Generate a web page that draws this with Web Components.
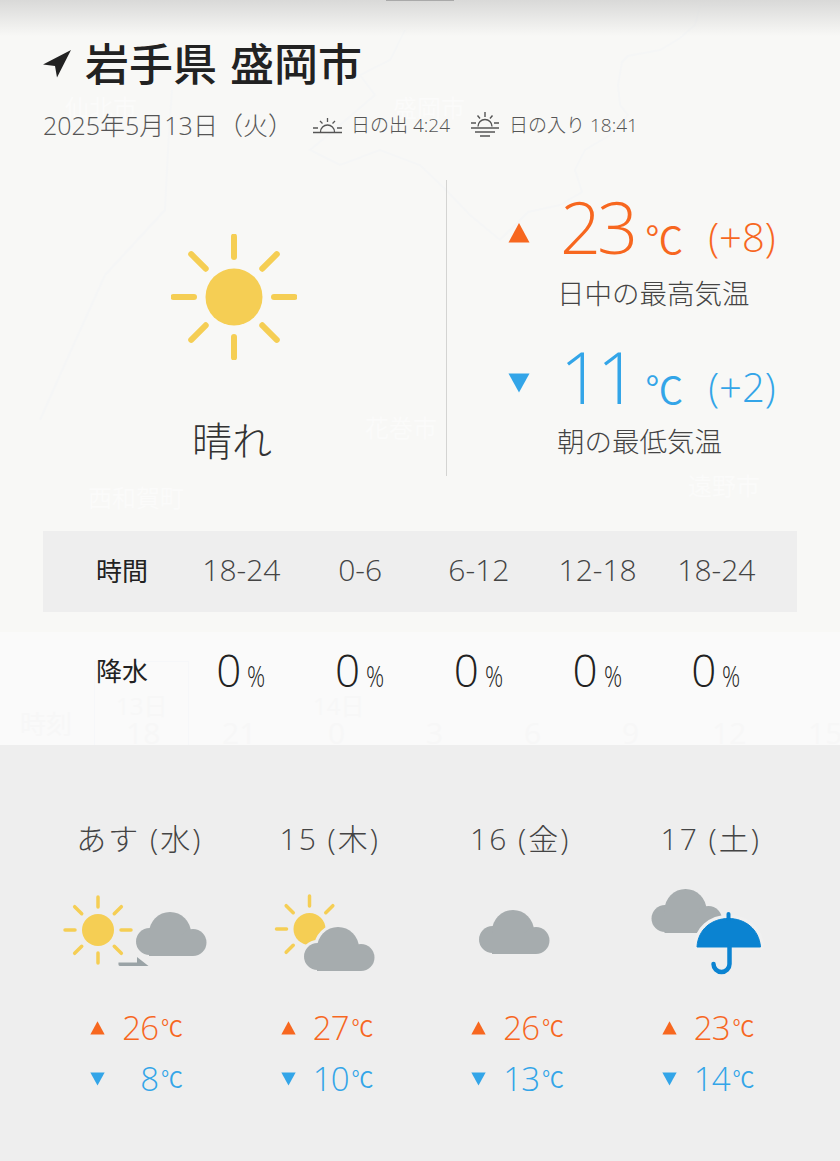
<!DOCTYPE html>
<html lang="ja">
<head>
<meta charset="utf-8">
<title>天気</title>
<style>
    html, body { margin: 0; background: #f8f8f6; }
    body { font-family: "Open Sans", "Noto Sans CJK JP", sans-serif; color: #444; }
</style>
</head>
<body>
<wx-app>
    <wx-map slot="map"></wx-map>
    <wx-header place="岩手県 盛岡市" date="2025年5月13日（火）" sunrise="日の出 4:24" sunset="日の入り 18:41"></wx-header>
    <wx-today></wx-today>
    <wx-rain></wx-rain>
    <wx-forecast>
        <wx-day label="あす (水)" icon="sun-cloud" high="26" low="8"></wx-day>
        <wx-day label="15 (木)" icon="sun-behind" high="27" low="10"></wx-day>
        <wx-day label="16 (金)" icon="cloud" high="26" low="13"></wx-day>
        <wx-day label="17 (土)" icon="rain" high="23" low="14"></wx-day>
    </wx-forecast>
</wx-app>

<script>
const ORANGE = "#f7671f"
const BLUE = "#33a5e8"
const SUN = "#f5ce54"
const GREY = "#a6acae"

const upTri = `<svg width="22" height="20" viewBox="0 0 22 20"><path d="M11 0 L21.500 19.500 L.5 19.500 Z" fill="${ORANGE}"/></svg>`
const downTri = `<svg width="22" height="20" viewBox="0 0 22 20"><path d="M.5 .5 L21.500 .5 L11 19.500 Z" fill="${BLUE}"/></svg>`

// sun with rays, angles are in degrees clockwise from the top
const sunSvg = (cx, cy, r, inner, outer, w, angles = [0, 45, 90, 135, 180, 225, 270, 315]) => {
    let rays = angles.map((a) => {
        let s = Math.sin(a * Math.PI / 180), c = -Math.cos(a * Math.PI / 180)
        return `<line x1="${cx + s * inner}" y1="${cy + c * inner}" x2="${cx + s * outer}" y2="${cy + c * outer}"/>`
    }).join("")
    return `<g stroke="${SUN}" stroke-width="${w}" stroke-linecap="round">${rays}</g><circle cx="${cx}" cy="${cy}" r="${r}" fill="${SUN}"/>`
}

// cloud is 70x44, x/y is its top left corner
const cloudSvg = (x, y, halo) => {
    let shape = `<circle cx="13.500" cy="29.500" r="13.500"/><circle cx="34" cy="21" r="21"/><circle cx="57" cy="30.500" r="13.500"/><rect x="13" y="24" width="44" height="20"/>`
    let edge = halo ? `<g transform="translate(${x} ${y})" fill="#eee" stroke="#eee" stroke-width="6">${shape}</g>` : ""
    return `${edge}<g transform="translate(${x} ${y})" fill="${GREY}">${shape}</g>`
}

const dayIcons = {
    "sun-cloud": sunSvg(53, 49, 16, 23, 33, 3.500) + cloudSvg(91, 31) +
        `<path d="M73.500 81.500 H92 V76 L103.500 85 H75 Q73 85 73.500 81.500 Z" fill="#9aa3a6"/>`,
    "sun-behind": sunSvg(73.500, 48, 16, 23, 33, 3.500, [0, 45, 270, 225, 315]) + cloudSvg(68, 46, true),
    "cloud": cloudSvg(53, 29),
    "rain": cloudSvg(34.500, 8) +
        `<path d="M79.500 66 C80 48 94 37 111 37 C129 37 143 48 144 66 Z" fill="#f0f0f0" stroke="#f0f0f0" stroke-width="6" stroke-linejoin="round"/>
         <path d="M80 66 C81 48 95 37.500 111.500 37.500 C128 37.500 142 48 143.500 66 Z" fill="#0b83d1" stroke="#0b83d1" stroke-width="1" stroke-linejoin="round"/>
         <path d="M111.500 38 V33" stroke="#0b83d1" stroke-width="4" stroke-linecap="round"/>
         <path d="M112.500 66 V83 A8 8 0 0 1 96.500 83" fill="none" stroke="#0b83d1" stroke-width="4.500" stroke-linecap="round"/>`
}

class WxApp extends HTMLElement {
    constructor() {
        super()
        this.attachShadow({ mode: "open" }).innerHTML = /*html*/`
        <style>
            :host { display: block; position: relative; width: 840px; height: 1161px; overflow: hidden; background: #f8f8f6; }
            #shade { position: absolute; left: 0; top: 0; right: 0; height: 36px; background: linear-gradient(#d9d9d8, rgba(248,248,246,0)); z-index: 2; }
            #grip { position: absolute; left: 386px; top: 0; width: 68px; height: 1px; background: #a9a9a9; z-index: 3; }
            #page { position: relative; z-index: 1; display: flex; flex-direction: column; height: 100%; }
        </style>
        <div id="shade"></div>
        <div id="grip"></div>
        <slot name="map"></slot>
        <div id="page"><slot></slot></div>`
    }
}

// the faint map behind the page
class WxMap extends HTMLElement {
    constructor() {
        super()
        const names = [["仙北市", 65, 92], ["盛岡市", 393, 92], ["花巻市", 365, 412], ["西和賀町", 88, 482], ["遠野市", 688, 470]]
        const cells = [["時刻", 20, 708, 26], ["13日", 116, 690, 24], ["14日", 313, 690, 24], ["18", 126, 717, 30], ["21", 222, 717, 30],
            ["0", 328, 717, 30], ["3", 426, 717, 30], ["6", 524, 717, 30], ["9", 622, 717, 30], ["12", 712, 717, 30], ["15", 808, 717, 30]]
        this.attachShadow({ mode: "open" }).innerHTML = /*html*/`
        <style>
            :host { position: absolute; inset: 0; display: block; }
            svg { position: absolute; left: 0; top: 0; }
            span { position: absolute; color: #fbfbfa; font-size: 24px; line-height: 32px; white-space: nowrap; }
            #lighter { position: absolute; left: 0; right: 0; top: 632px; height: 113px; background: #fafafa; }
            #lighter2 { position: absolute; left: 94px; top: 661px; width: 95px; height: 90px; border: 1px solid #f6f7f9; box-sizing: border-box; }
            .cell { color: #f7f7f7; }
        </style>
        <div id="lighter"></div>
        <div id="lighter2"></div>
        <svg width="840" height="745" fill="none" stroke="#f5f6f6" stroke-width="2">
            <path d="M840 4 L700 6 L695 25 L680 38 L660 50 L628 56 L622 62 L618 85 L620 105 L628 115 L610 135 L585 150 L575 170 L582 192 L560 205"/>
            <path d="M560 205 L528 212 L500 240 L470 215 L446 190 L420 165 L380 150 L340 165 L310 150 L340 125 L375 95 L360 75 L390 60 L405 30"/>
            <path d="M172 90 L168 150 L165 210 L105 275 L60 375 L40 420"/>
        </svg>
        ${names.map((n) => `<span style="left:${n[1]}px;top:${n[2]}px">${n[0]}</span>`).join("")}
        ${cells.map((c) => `<span class="cell" style="left:${c[1]}px;top:${c[2]}px;font-size:${c[3]}px">${c[0]}</span>`).join("")}`
    }
}

class WxHeader extends HTMLElement {
    constructor() {
        super()
        this.attachShadow({ mode: "open" }).innerHTML = /*html*/`
        <style>
            :host { display: block; padding: 35px 0 38px 43px; }
            h1 { margin: 0; height: 54px; display: flex; align-items: center; font: 500 44px/54px "Noto Sans CJK JP", sans-serif; color: #222; white-space: pre; word-spacing: 3px; }
            h1 svg { margin-right: 14px; margin-top: 3px; }
            #sub { display: flex; align-items: center; height: 36px; margin-top: 17px; color: #555; }
            #date { font-size: 25px; font-weight: 300; width: 270px; white-space: nowrap; }
            .sun { display: flex; align-items: center; font-size: 19px; font-weight: 300; white-space: nowrap; }
            .sun svg { margin-right: 9px; }
            #rise { width: 157px; }
        </style>
        <h1>
            <svg width="28" height="28" viewBox="0 0 28 28"><path d="M0 14.500 L28 0 L14 27.500 L12 16 Z" fill="#222"/></svg>
            <span id="place"></span>
        </h1>
        <div id="sub">
            <span id="date"></span>
            <span class="sun" id="rise">
                <svg width="29" height="20" viewBox="0 0 29 20" fill="none" stroke="#555" stroke-width="1.300">
                    <path d="M0 18.500 H29 M7.500 18 A7 7 0 0 1 21.500 18 M0 14 H5 M24 14 H29 M14.500 4 V8 M7 7 L9.500 9.500 M22 7 L19.500 9.500"/>
                </svg>
                <span id="riseText"></span>
            </span>
            <span class="sun" id="set">
                <svg width="30" height="26" viewBox="0 0 30 26" fill="none" stroke="#555" stroke-width="1.400">
                    <path d="M1 17 H29 M5 21 H25 M10 25 H20 M8 15.500 A7 7 0 0 1 22 15.500 M1 12 H6 M24 12 H29 M15 1 V6 M7.500 4.500 L10 7.500 M22.500 4.500 L20 7.500"/>
                </svg>
                <span id="setText"></span>
            </span>
        </div>`
    }
    connectedCallback() {
        this.shadowRoot.querySelector("#place").textContent = this.getAttribute("place")
        this.shadowRoot.querySelector("#date").textContent = this.getAttribute("date")
        this.shadowRoot.querySelector("#riseText").textContent = this.getAttribute("sunrise")
        this.shadowRoot.querySelector("#setText").textContent = this.getAttribute("sunset")
    }
}

class WxToday extends HTMLElement {
    constructor() {
        super()
        this.attachShadow({ mode: "open" }).innerHTML = /*html*/`
        <style>
            :host { display: grid; grid-template-columns: 446px 1fr; height: 296px; flex: none; }
            #now { display: flex; flex-direction: column; align-items: center; padding: 54px 0 0 22px; box-sizing: border-box; }
            #now svg { display: block; }
            #now div { font-size: 40px; font-weight: 300; line-height: 50px; margin: 56px 0 0 -4px; color: #333; }
            #temps { border-left: 1px solid #d4d4d2; padding-left: 61px; }
            .line { display: grid; grid-template-columns: 52px auto; }
            .line svg { margin-top: 43px; }
            .big { display: flex; align-items: baseline; height: 92px; white-space: nowrap; }
            .num { font-size: 72px; font-weight: 350; letter-spacing: -4px; line-height: 92px; }
            .unit { font-size: 38px; font-weight: 350; margin-left: 11px; width: 63px; }
            .diff { font-size: 40px; font-weight: 350; position: relative; top: -2px; }
            .cap { grid-column: 2; font-size: 27.500px; font-weight: 300; line-height: 36px; color: #444; margin: 4px 0 0 -3px; white-space: nowrap; }
            .line + .line { margin-top: 18px; }
            .line + .line .cap { margin-top: 2px; }
            .hi { color: ${ORANGE}; } .lo { color: ${BLUE}; }
        </style>
        <div id="now">
            <svg width="126" height="126" viewBox="0 0 126 126">${sunSvg(63, 63, 28.500, 40, 60.500, 6)}</svg>
            <div>晴れ</div>
        </div>
        <div id="temps">
            <div class="line hi">${upTri}
                <div class="big"><span class="num">23</span><span class="unit">℃</span><span class="diff">(+8)</span></div>
                <div class="cap">日中の最高気温</div>
            </div>
            <div class="line lo">${downTri}
                <div class="big"><span class="num">11</span><span class="unit">℃</span><span class="diff">(+2)</span></div>
                <div class="cap">朝の最低気温</div>
            </div>
        </div>`
    }
}

class WxRain extends HTMLElement {
    constructor() {
        super()
        const hours = ["18-24", "0-6", "6-12", "12-18", "18-24"]
        const rows = `repeat(5, 118.750px)`
        this.attachShadow({ mode: "open" }).innerHTML = /*html*/`
        <style>
            :host { display: block; padding-top: 55px; height: 269px; box-sizing: border-box; flex: none; }
            .row { display: grid; grid-template-columns: 139px ${rows}; align-items: center; justify-items: center; margin-left: 43px; width: 754px; }
            #time { height: 81px; background: #eee; }
            #rain { height: 120px; }
            b { font: 400 26px/1 "Noto Sans CJK JP", sans-serif; color: #222; padding: 0 0 4px 19px; }
            .h { font-size: 30px; font-weight: 300; color: #444; padding-bottom: 4px; }
            .p { font-size: 44px; font-weight: 300; color: #222; white-space: nowrap; padding-bottom: 4px; }
            .p small { display: inline-block; width: 19px; margin-left: 6px; font-size: 30px; transform: scaleX(.75); transform-origin: left; }
        </style>
        <div class="row" id="time"><b>時間</b>${hours.map((h) => `<span class="h">${h}</span>`).join("")}</div>
        <div class="row" id="rain"><b>降水</b>${hours.map(() => `<span class="p">0<small>%</small></span>`).join("")}</div>`
    }
}

class WxForecast extends HTMLElement {
    constructor() {
        super()
        this.attachShadow({ mode: "open" }).innerHTML = /*html*/`
        <style>
            :host { display: grid; grid-template-columns: repeat(4, 190.500px); padding: 73px 0 0 45px; background: #eee; flex: 1; }
        </style>
        <slot></slot>`
    }
}

class WxDay extends HTMLElement {
    constructor() {
        super()
        this.attachShadow({ mode: "open" }).innerHTML = /*html*/`
        <style>
            :host { display: block; }
            #label { text-align: center; font-size: 30px; font-weight: 300; letter-spacing: 2px; line-height: 42px; color: #444; height: 42px; padding-right: 2px; white-space: nowrap; }
            svg { display: block; }
            #icon { margin-top: 21px; }
            .t { display: grid; grid-template-columns: 15px 53px auto; align-items: center; padding-left: 45px; height: 51px; }
            .t svg { width: 15px; height: 14px; }
            .t span { font-size: 33px; font-weight: 350; text-align: right; line-height: 51px; letter-spacing: -1px; }
            .t i { font-style: normal; font-size: 22px; font-weight: 350; margin-left: 3px; line-height: 51px; }
            #hi { color: ${ORANGE}; margin-top: 21px; } #lo { color: ${BLUE}; }
        </style>
        <div id="label"></div>
        <svg id="icon" width="190" height="100" viewBox="0 0 190 100"></svg>
        <div class="t" id="hi">${upTri}<span id="high"></span><i>℃</i></div>
        <div class="t" id="lo">${downTri}<span id="low"></span><i>℃</i></div>`
    }
    connectedCallback() {
        this.shadowRoot.querySelector("#label").textContent = this.getAttribute("label")
        this.shadowRoot.querySelector("#icon").innerHTML = dayIcons[this.getAttribute("icon")]
        this.shadowRoot.querySelector("#high").textContent = this.getAttribute("high")
        this.shadowRoot.querySelector("#low").textContent = this.getAttribute("low")
    }
}

customElements.define("wx-app", WxApp)
customElements.define("wx-map", WxMap)
customElements.define("wx-header", WxHeader)
customElements.define("wx-today", WxToday)
customElements.define("wx-rain", WxRain)
customElements.define("wx-forecast", WxForecast)
customElements.define("wx-day", WxDay)
</script>
</body>
</html>
